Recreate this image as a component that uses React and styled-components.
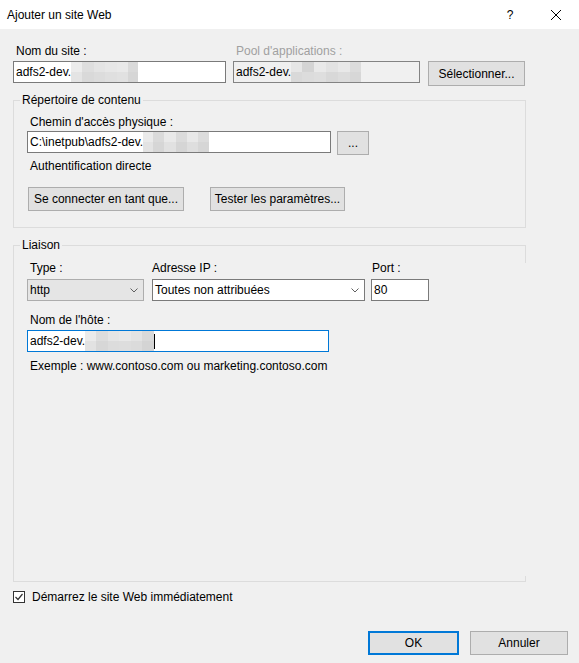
import styled, { createGlobalStyle } from 'styled-components';

const GlobalStyle = createGlobalStyle`
    html, body {
        margin: 0;
        padding: 0;
        background: #f0f0f0;
    }
    body {
        font-family: "Liberation Sans", Arial, sans-serif;
        font-size: 12px;
        color: #000;
    }
`;

// pixelated blocks hiding part of the host name
const MASKS = {
    site: [
        ['#ececec', '#e4e4e4', 11],
        ['#dedede', '#d9d9d9', 12],
        ['#e4e4e4', '#dcdcdc', 11],
        ['#e7e7e7', '#dfdfdf', 12],
        ['#e9e9e9', '#e1e1e1', 11],
        ['#dadada', '#d6d6d6', 10],
    ],
    pool: [
        ['#e6e6e6', '#d9d9d9', 11],
        ['#d4d4d4', '#dcdcdc', 12],
        ['#e9e9e9', '#dedede', 12],
        ['#e2e2e2', '#d8d8d8', 12],
        ['#e8e8e8', '#dcdcdc', 12],
        ['#dcdcdc', '#d7d7d7', 11],
    ],
    path: [
        ['#eaeaea', '#e3e3e3', 10],
        ['#dadada', '#d6d6d6', 11],
        ['#e9e9e9', '#e1e1e1', 12],
        ['#dbdbdb', '#d5d5d5', 11],
        ['#e8e8e8', '#dedede', 11],
        ['#dcdcdc', '#d6d6d6', 11],
    ],
    host: [
        ['#ebebeb', '#e2e2e2', 11],
        ['#dddddd', '#d7d7d7', 12],
        ['#e5e5e5', '#dcdcdc', 11],
        ['#e8e8e8', '#dddddd', 12],
        ['#e3e3e3', '#dbdbdb', 11],
        ['#d9d9d9', '#d4d4d4', 12],
    ],
};

export default function App() {
    return (
        <>
            <GlobalStyle />
            <Window>
                <TitleBar>
                    <Title>Ajouter un site Web</Title>
                    <CaptionButtons>
                        <CaptionButton>?</CaptionButton>
                        <CaptionButton>
                            <svg width="10" height="10" viewBox="0 0 10 10">
                                <path d="M0 0 L10 10 M10 0 L0 10" stroke="#000" strokeWidth="1" />
                            </svg>
                        </CaptionButton>
                    </CaptionButtons>
                </TitleBar>

                <Body>
                    <SiteGrid>
                        <Label $inset={3}>Nom du site :</Label>
                        <Label $inset={3} $muted>Pool d'applications :</Label>
                        <span />
                        <TextBox>
                            <BoxText>adfs2-dev.</BoxText>
                            <Mask cells={MASKS.site} />
                        </TextBox>
                        <TextBox $readOnly>
                            <BoxText>adfs2-dev.</BoxText>
                            <Mask cells={MASKS.pool} />
                        </TextBox>
                        <Button $w={97} $h={25} $ml={1}>Sélectionner...</Button>
                    </SiteGrid>

                    <Group $mt={7}>
                        <Legend>Répertoire de contenu</Legend>
                        <GroupContent $pt={7} $pb={16}>
                            <Label $inset={3}>Chemin d'accès physique :</Label>
                            <Row $mt={1} $gap={6}>
                                <TextBox $w={304}>
                                    <BoxText>C:\inetpub\adfs2-dev.</BoxText>
                                    <Mask cells={MASKS.path} />
                                </TextBox>
                                <Button $w={32} $h={24}>...</Button>
                            </Row>
                            <Label $inset={3} $mt={4}>Authentification directe</Label>
                            <Row $mt={13} $gap={26}>
                                <Button $w={156} $h={24} $ml={1}>Se connecter en tant que...</Button>
                                <Button $w={135} $h={24}>Tester les paramètres...</Button>
                            </Row>
                        </GroupContent>
                    </Group>

                    <BindingFrame>
                        <Group $grow>
                            <Legend>Liaison</Legend>
                            <GroupContent $pt={8}>
                                <Row $gap={0}>
                                    <BindCol $w={117} $mr={8}>
                                        <Label $inset={3}>Type :</Label>
                                        <Combo $flat>
                                            <BoxText>http</BoxText>
                                            <Chevron />
                                        </Combo>
                                    </BindCol>
                                    <BindCol $w={213} $mr={6}>
                                        <Label>Adresse IP :</Label>
                                        <Combo>
                                            <BoxText>Toutes non attribuées</BoxText>
                                            <Chevron />
                                        </Combo>
                                    </BindCol>
                                    <BindCol $w={58}>
                                        <Label $inset={1}>Port :</Label>
                                        <TextBox $mt={3}>
                                            <BoxText>80</BoxText>
                                        </TextBox>
                                    </BindCol>
                                </Row>
                                <Label $inset={3} $mt={12}>Nom de l'hôte :</Label>
                                <TextBox $w={302} $mt={2} $focused>
                                    <BoxText>adfs2-dev.</BoxText>
                                    <Mask cells={MASKS.host} />
                                    <Caret />
                                </TextBox>
                                <Label $inset={3} $mt={7}>Exemple : www.contoso.com ou marketing.contoso.com</Label>
                            </GroupContent>
                        </Group>
                    </BindingFrame>

                    <CheckRow>
                        <CheckBox>
                            <svg width="10" height="10" viewBox="0 0 10 10">
                                <path d="M1.5 5 L4 7.5 L8.5 2" stroke="#333" strokeWidth="1.2" fill="none" />
                            </svg>
                        </CheckBox>
                        <span>Démarrez le site Web immédiatement</span>
                    </CheckRow>

                    <Footer>
                        <Button $w={91} $h={24} $default>OK</Button>
                        <Button $w={98} $h={24}>Annuler</Button>
                    </Footer>
                </Body>
            </Window>
        </>
    );
}

const Mask = ({ cells }) => (
    <MaskStrip>
        {cells.map(([top, bottom, w], i) => (
            <MaskCell key={i} $top={top} $bottom={bottom} $w={w} />
        ))}
    </MaskStrip>
);

const Chevron = () => (
    <ChevronIcon width="8" height="5" viewBox="0 0 8 5">
        <polyline points="0.5,0.5 4,4 7.5,0.5" fill="none" stroke="#606060" strokeWidth="1" />
    </ChevronIcon>
);

const Window = styled.div`
    width: 579px;
    height: 663px;
    display: flex;
    flex-direction: column;
    background: #f0f0f0;
    overflow: hidden;
`;

const TitleBar = styled.div`
    height: 29px;
    flex: none;
    display: flex;
    align-items: center;
    background: #fff;
    padding-left: 7px;
`;

const Title = styled.span`
    font-size: 12px;
    padding-top: 1px;
`;

const CaptionButtons = styled.div`
    margin-left: auto;
    display: flex;
    height: 100%;
`;

const CaptionButton = styled.div`
    width: 46px;
    height: 100%;
    display: flex;
    align-items: center;
    justify-content: center;
    font-size: 12px;
`;

const Body = styled.div`
    flex: 1;
    display: flex;
    flex-direction: column;
    padding: 15px 11px 8px 13px;
    min-height: 0;
`;

const SiteGrid = styled.div`
    width: 513px;
    display: grid;
    grid-template-columns: 213px 187px 98px;
    column-gap: 7px;
    row-gap: 2px;
    align-items: start;
`;

const Label = styled.div`
    line-height: 15px;
    white-space: nowrap;
    padding-left: ${(p) => p.$inset || 0}px;
    margin-top: ${(p) => p.$mt || 0}px;
    color: ${(p) => (p.$muted ? '#a0a0a0' : '#000')};
`;

const TextBox = styled.div`
    box-sizing: border-box;
    width: ${(p) => (p.$w ? `${p.$w}px` : 'auto')};
    height: 22px;
    margin-top: ${(p) => p.$mt || 0}px;
    display: flex;
    align-items: stretch;
    padding-left: 2px;
    background: ${(p) => (p.$readOnly ? '#f0f0f0' : '#fff')};
    border: 1px solid ${(p) => (p.$focused ? '#0078d7' : p.$readOnly ? '#838383' : '#7a7a7a')};
    overflow: hidden;
`;

const BoxText = styled.span`
    line-height: 20px;
    white-space: nowrap;
`;

const MaskStrip = styled.span`
    display: inline-flex;
    height: 100%;
`;

const MaskCell = styled.span`
    width: ${(p) => p.$w}px;
    height: 100%;
    background: linear-gradient(${(p) => p.$top} 50%, ${(p) => p.$bottom} 50%);
`;

const Caret = styled.span`
    width: 1px;
    height: 15px;
    align-self: center;
    background: #000;
`;

const Button = styled.button`
    box-sizing: border-box;
    width: ${(p) => p.$w}px;
    height: ${(p) => p.$h}px;
    margin: 0 0 0 ${(p) => p.$ml || 0}px;
    padding: 0;
    font-family: inherit;
    font-size: 12px;
    color: #000;
    background: #e1e1e1;
    border: ${(p) => (p.$default ? '2px solid #0078d7' : '1px solid #adadad')};
    border-radius: 0;
    white-space: nowrap;
`;

const Group = styled.fieldset`
    width: 513px;
    box-sizing: border-box;
    margin: ${(p) => p.$mt || 0}px 0 0;
    padding: 0;
    min-width: 0;
    border: 1px solid #dcdcdc;
    ${(p) => p.$grow && 'flex: 1; border-right-color: transparent;'}
`;

const Legend = styled.legend`
    margin-left: 6px;
    padding: 0 2px;
    line-height: 15px;
    font-size: 12px;
`;

const GroupContent = styled.div`
    display: flex;
    flex-direction: column;
    align-items: flex-start;
    padding: ${(p) => p.$pt || 0}px 0 ${(p) => p.$pb || 0}px 13px;
`;

const Row = styled.div`
    display: flex;
    align-items: flex-start;
    gap: ${(p) => p.$gap}px;
    margin-top: ${(p) => p.$mt || 0}px;
`;

// the right edge of this frame only shows near its corners
const BindingFrame = styled.div`
    flex: 1;
    min-height: 0;
    margin-top: 10px;
    display: flex;
    flex-direction: column;
    position: relative;
    width: 513px;

    &::before,
    &::after {
        content: '';
        position: absolute;
        right: 0;
        width: 1px;
        background: #dcdcdc;
    }
    &::before {
        top: 7px;
        height: 18px;
    }
    &::after {
        bottom: 0;
        height: 6px;
    }
`;

const BindCol = styled.div`
    width: ${(p) => p.$w}px;
    margin-right: ${(p) => p.$mr || 0}px;
    display: flex;
    flex-direction: column;
    align-items: stretch;
`;

const Combo = styled.div`
    box-sizing: border-box;
    height: 22px;
    margin-top: 3px;
    display: flex;
    align-items: stretch;
    padding: 0 5px 0 2px;
    background: ${(p) => (p.$flat ? '#e5e5e5' : '#fff')};
    border: 1px solid ${(p) => (p.$flat ? '#adadad' : '#7a7a7a')};
`;

const ChevronIcon = styled.svg`
    margin-left: auto;
    align-self: center;
`;

const CheckRow = styled.label`
    margin-top: 9px;
    display: flex;
    align-items: center;
    gap: 7px;
    line-height: 15px;
    height: 12px;
    flex: none;
`;

const CheckBox = styled.span`
    box-sizing: border-box;
    width: 12px;
    height: 12px;
    display: flex;
    align-items: center;
    justify-content: center;
    background: #fff;
    border: 1px solid #333;
`;

const Footer = styled.div`
    margin-top: 28px;
    flex: none;
    display: flex;
    justify-content: flex-end;
    gap: 11px;
`;
